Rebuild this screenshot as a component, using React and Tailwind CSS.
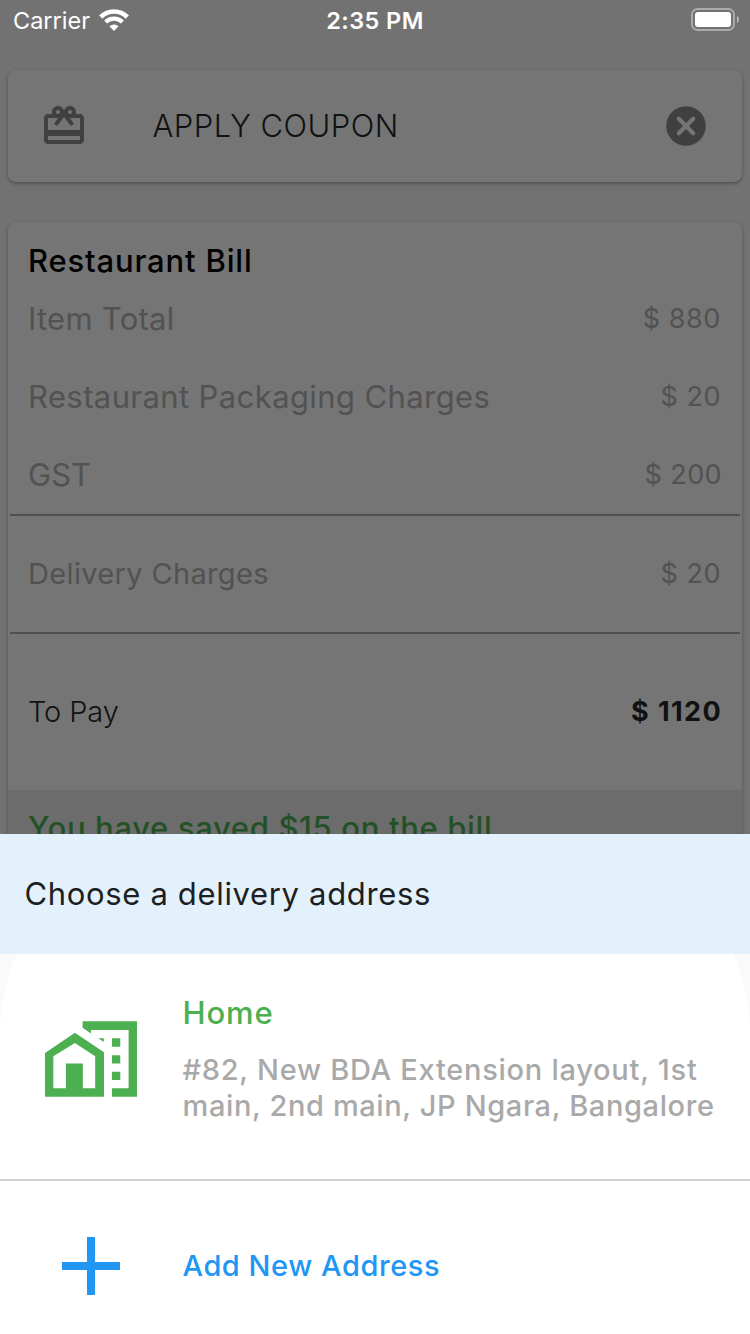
function WifiIcon() {
  return (
    <svg className="h-[23px] w-[30px]" viewBox="0 0 30 23" fill="none">
      <path d="M1.7 8 A19 19 0 0 1 28.3 8" stroke="white" strokeWidth="4.6" />
      <path d="M6.6 13.1 A12 12 0 0 1 23.4 13.1" stroke="white" strokeWidth="4.2" />
      <path d="M15 22 L10.4 17.3 A6.6 6.6 0 0 1 19.6 17.3 Z" fill="white" />
    </svg>
  );
}

function BatteryIcon() {
  return (
    <svg className="h-[24px] w-[49px]" viewBox="0 0 49 24" fill="none">
      <rect x="1" y="1" width="42" height="21" rx="5.5" stroke="white" strokeOpacity="0.4" strokeWidth="2" />
      <rect x="4" y="4" width="36" height="15" rx="3" fill="white" />
      <path d="M46 8 C48.6 9 48.6 14 46 15 Z" fill="white" fillOpacity="0.5" />
    </svg>
  );
}

function GiftCardIcon() {
  return (
    <svg className="size-12" viewBox="0 0 24 24" fill="#404040">
      <path
        fillRule="evenodd"
        d="M20 6h-2.18c.11-.31.18-.65.18-1 0-1.66-1.34-3-3-3-1.05 0-1.96.54-2.5 1.35l-.5.67-.5-.68C10.96 2.54 10.05 2 9 2 7.34 2 6 3.34 6 5c0 .35.07.69.18 1H4c-1.11 0-2 .89-2 2v11c0 1.11.89 2 2 2h16c1.11 0 2-.89 2-2V8c0-1.11-.89-2-2-2z M15 4c.55 0 1 .45 1 1s-.45 1-1 1-1-.45-1-1 .45-1 1-1z M9 4c.55 0 1 .45 1 1s-.45 1-1 1-1-.45-1-1 .45-1 1-1z M20 19H4v-2h16z M20 14H4V8h5.08L7 10.83 8.62 12 12 7.4 15.38 12 17 10.83 14.92 8H20z"
      />
    </svg>
  );
}

function CancelIcon() {
  return (
    <svg className="size-10" viewBox="0 0 40 40">
      <circle cx="20" cy="20" r="19.8" fill="#404040" />
      <path d="M12.8 12.8 L27.2 27.2 M27.2 12.8 L12.8 27.2" stroke="#757575" strokeWidth="4.2" strokeLinecap="round" />
    </svg>
  );
}

function HomeWorkIcon() {
  return (
    <svg className="h-[76px] w-[92px]" viewBox="0 0 22 18.1" fill="#4caf50">
      <path
        fillRule="evenodd"
        d="M0 7.6 L7.15 2.8 L14.1 7.45 V18.1 H0 Z M2 16.05 H5 V10.1 H9.05 V16.05 H12 V8.4 L7.15 5.2 L2 8.4 Z"
      />
      <path d="M9 0 H22 V18.1 H16 V16.05 H20 V2.1 H11 V2.95 L9 1.6 Z" />
      <path d="M16 4.1h2v2h-2z M16 8.15h2v2h-2z M16 12.1h2v2h-2z M12.75 4.1h1.3v0.9z" />
    </svg>
  );
}

function BillRow({ children, className }) {
  return <div className={`flex items-center justify-between pl-5 pr-[21px] ${className}`}>{children}</div>;
}

function Divider() {
  return <div className="mx-0.5 h-0.5 bg-[#505050]" />;
}

export default function App() {
  return (
    <div className="flex h-[1334px] w-[750px] flex-col overflow-hidden bg-[#727272] font-['Inter',sans-serif] whitespace-nowrap">
      <div className="flex h-[834px] flex-col overflow-hidden">
        <header className="grid h-10 shrink-0 grid-cols-3 items-center text-[23.5px] text-white">
          <div className="flex items-center gap-[9px] pl-[13px]">
            <span className="pt-0.5">Carrier</span>
            <WifiIcon />
          </div>
          <div className="pt-0.5 text-center font-semibold tracking-[0.4px]">2:35 PM</div>
          <div className="flex justify-end pr-[10px]">
            <BatteryIcon />
          </div>
        </header>

        <section className="mx-2 mt-[30px] flex h-28 shrink-0 items-center rounded-lg bg-[#757575] pr-9 pl-8 shadow-[0_2px_3px_rgba(0,0,0,0.2),0_1px_5px_rgba(0,0,0,0.12)]">
          <GiftCardIcon />
          <div className="ml-[64.5px] flex-1 pt-px text-[31px] font-[350] tracking-[0.47px] text-[#111111]">APPLY COUPON</div>
          <CancelIcon />
        </section>

        <section className="mx-2 mt-10 h-[700px] shrink-0 rounded-lg bg-[#757575] shadow-[0_2px_3px_rgba(0,0,0,0.2),0_1px_5px_rgba(0,0,0,0.12)]">
          <div className="flex h-[58px] items-center pt-5 pl-5">
            <h2 className="text-[31px] font-medium tracking-[0.82px] text-black">Restaurant Bill</h2>
          </div>
          <div className="text-[#525252]">
            <BillRow className="h-[78px]">
              <span className="text-[31px] tracking-[0.25px]">Item Total</span>
              <span className="text-[27px] tracking-[0.6px]">$ 880</span>
            </BillRow>
            <BillRow className="h-[78px]">
              <span className="text-[31px] tracking-[0.4px]">Restaurant Packaging Charges</span>
              <span className="text-[27px] tracking-[0.5px]">$ 20</span>
            </BillRow>
            <BillRow className="h-[78px]">
              <span className="text-[31px] tracking-[0px]">GST</span>
              <span className="-mr-px text-[27px] tracking-[0.4px]">$ 200</span>
            </BillRow>
            <Divider />
            <BillRow className="h-[116px]">
              <span className="text-[29px] tracking-[0.34px]">Delivery Charges</span>
              <span className="text-[27px] tracking-[0.5px]">$ 20</span>
            </BillRow>
          </div>
          <Divider />
          <BillRow className="h-[156px] text-[#111111]">
            <span className="text-[29px] font-[350] tracking-[-0.1px]">To Pay</span>
            <span className="-mr-px text-[27px] font-bold tracking-[1.4px]">$ 1120</span>
          </BillRow>
          <div className="flex h-[77px] items-center bg-[#6c6c6c] pl-5 text-[31px] font-medium tracking-[0.65px] text-[#235125]">
            You have saved $15 on the bill
          </div>
        </section>
      </div>

      <div className="h-[500px] bg-[#fafafa]">
        <div className="h-[500px] rounded-t-[200px] bg-white">
          <div className="flex h-[120px] items-center bg-[#e3f1fd] pl-[24.5px] text-[31px] tracking-[0.66px] text-[#1d1f21]">
            Choose a delivery address
          </div>
          <div className="flex h-[225px] items-start pl-[45px]">
            <div className="mt-[67px]">
              <HomeWorkIcon />
            </div>
            <div className="mt-10 ml-[45.5px]">
              <div className="text-[31px] leading-[38px] font-medium tracking-[0.85px] text-[#4caf50]">Home</div>
              <div className="mt-5 text-[29px] leading-9 font-medium text-[#a9a9a9]">
                <div className="tracking-[0.73px]">#82, New BDA Extension layout, 1st</div>
                <div className="tracking-[0.62px]">main, 2nd main, JP Ngara, Bangalore</div>
              </div>
            </div>
          </div>
          <div className="h-0.5 bg-[#d3d3d3]" />
          <div className="flex items-center pt-14 pl-[62px]">
            <svg className="h-[58px] w-[58px]" viewBox="0 0 58 58" fill="#2196f3">
              <path d="M25 0h8v25h25v8h-25v25h-8v-25h-25v-8h25z" />
            </svg>
            <div className="ml-[62.5px] text-[29px] font-medium tracking-[0.55px] text-[#2196f3]">Add New Address</div>
          </div>
        </div>
      </div>
    </div>
  );
}
